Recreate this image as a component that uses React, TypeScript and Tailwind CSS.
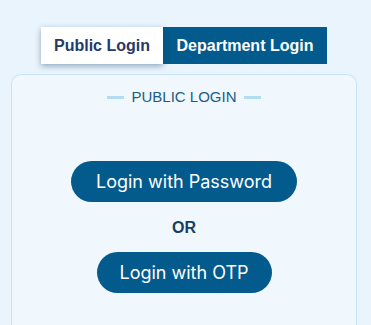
export default function App() {
  return (
    <div className="min-h-[325px] bg-[#eaf4fc] pt-[27px] font-['Liberation_Sans',Arial,sans-serif]">
      <div className="ml-[11px] w-[346px]">
        <div className="flex justify-center">
          <button className="h-[37px] w-[122px] bg-white text-[16px] font-bold text-[#253a6b] shadow-[0_2px_6px_rgba(20,70,110,0.45)] relative z-10">
            Public Login
          </button>
          <button className="h-[37px] w-[164px] bg-[#035a8c] text-[16px] font-bold text-white">
            Department Login
          </button>
        </div>
        <div className="mt-[10px] h-[260px] rounded-t-[10px] border border-b-0 border-[#c9e3f2] bg-[#f0f8fd]">
          <div className="mt-[11px] flex items-center justify-center gap-[7px]">
            <span className="h-[3px] w-[17px] bg-[#b3dcf1]" />
            <span className="text-[15px] text-[#1a5d88]">PUBLIC LOGIN</span>
            <span className="h-[3px] w-[17px] bg-[#b3dcf1]" />
          </div>
          <div className="mt-[52px] flex flex-col items-center font-['Inter',sans-serif]">
            <button className="h-[41px] w-[226px] rounded-full bg-[#035a8c] text-[18px] text-white">
              Login with Password
            </button>
            <div className="mt-[14px] font-['Liberation_Sans',Arial,sans-serif] text-[16px] font-bold text-[#17405f]">
              OR
            </div>
            <button className="mt-[12px] h-[41px] w-[175px] rounded-full bg-[#035a8c] text-[18px] text-white">
              Login with OTP
            </button>
          </div>
        </div>
      </div>
    </div>
  );
}
